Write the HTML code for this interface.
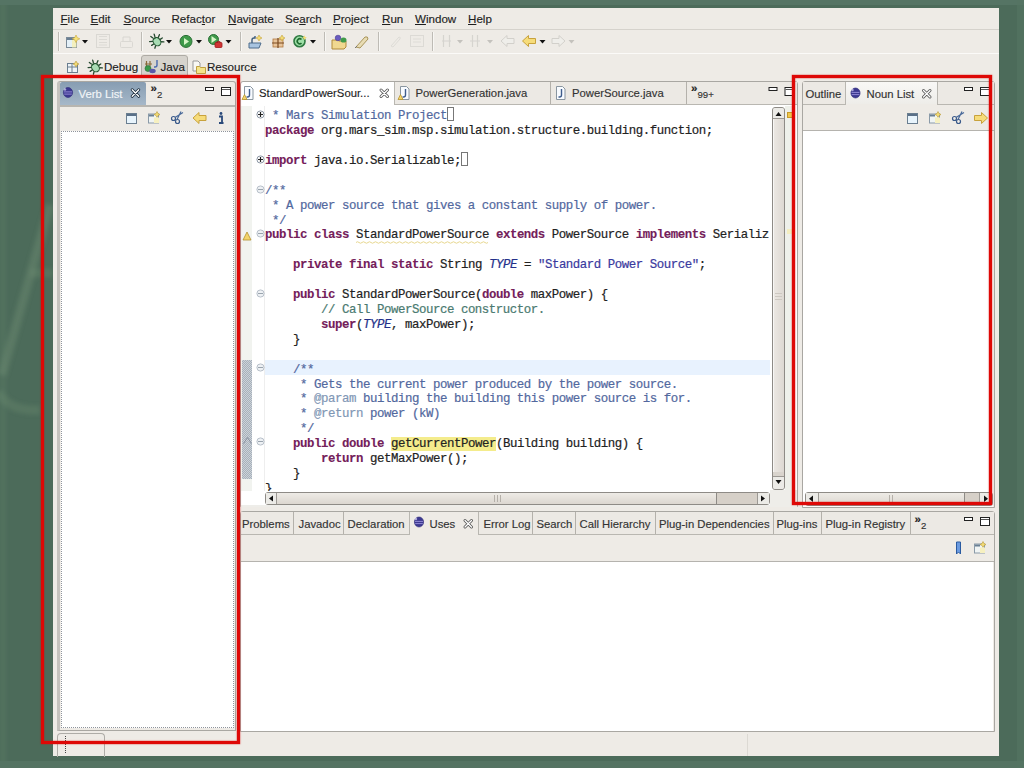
<!DOCTYPE html>
<html><head><meta charset="utf-8">
<style>
*{box-sizing:border-box;margin:0;padding:0}
html,body{width:1024px;height:768px;overflow:hidden;background:#4c6b5a;font-family:"Liberation Sans",sans-serif;font-size:11.3px;color:#1e1e1e}
.a{position:absolute}
.t{position:absolute;white-space:pre;line-height:1;-webkit-text-stroke:0.15px}
.m{position:absolute;white-space:pre;line-height:1;font-size:11.6px;top:13px;-webkit-text-stroke:0.15px}
.u{text-decoration:underline}
.code{font-family:"Liberation Mono",monospace;font-size:12.4px;letter-spacing:-0.44px;line-height:14.9px;white-space:pre;color:#222;-webkit-text-stroke:0.2px}
.xk{color:#74205a;font-weight:bold;-webkit-text-stroke:0.1px}
.xc{color:#52689e}
.xg{color:#4a7a70}
.xs{color:#3a3a9e}
.xi{font-style:italic;color:#23308a}
.xt{color:#7f97b5}
.xhl{background:#f4ec8c}
.red{position:absolute;border:3px solid #de0806;box-shadow:0 0 1px 0.3px rgba(215,12,8,.7),inset 0 0 1px 0.3px rgba(215,12,8,.7)}
.sep{position:absolute;width:2px;border-left:1px solid #bebbb5;border-right:1px solid #f8f7f4}
.vsep{position:absolute;width:1px;background:#b4b1ab}
svg{position:absolute;overflow:visible}
</style></head><body>
<svg style="left:0;top:0" width="53" height="768"><defs><filter id="bl" x="-50%" y="-50%" width="200%" height="200%"><feGaussianBlur stdDeviation="2"/></filter></defs><g filter="url(#bl)" fill="none" stroke="#86a482"><path d="M2 375 L50 205" stroke-width="9" opacity="0.25"/><path d="M30 273 L53 273" stroke-width="9" opacity="0.18"/><path d="M-2 392 Q10 412 40 410" stroke-width="9" opacity="0.2"/><path d="M3 0 V768" stroke-width="6" opacity="0.12"/></g></svg>
<div class="a" style="left:0;top:0;width:1024px;height:5px;background:#557464"></div>
<div class="a" style="left:0;top:761px;width:1024px;height:7px;background:#547362"></div>
<div class="a" style="left:53px;top:8px;width:946px;height:748px;background:#eeebe6"></div>

<!-- menu -->
<div class="a" style="left:53px;top:29px;width:946px;height:1px;background:#d5d2cc"></div>
<div class="m" style="left:60.5px"><span class="u">F</span>ile</div>
<div class="m" style="left:90.5px"><span class="u">E</span>dit</div>
<div class="m" style="left:123.5px"><span class="u">S</span>ource</div>
<div class="m" style="left:171.5px">Refac<span class="u">t</span>or</div>
<div class="m" style="left:228px"><span class="u">N</span>avigate</div>
<div class="m" style="left:285px">Se<span class="u">a</span>rch</div>
<div class="m" style="left:333px"><span class="u">P</span>roject</div>
<div class="m" style="left:382px"><span class="u">R</span>un</div>
<div class="m" style="left:415px"><span class="u">W</span>indow</div>
<div class="m" style="left:468px"><span class="u">H</span>elp</div>

<!-- toolbar -->
<div class="a" style="left:53px;top:53px;width:946px;height:1px;background:#fbfaf8"></div>
<div class="sep" style="left:58px;top:32px;height:19px"></div>
<div class="sep" style="left:141px;top:32px;height:19px"></div>
<div class="sep" style="left:240px;top:32px;height:19px"></div>
<div class="sep" style="left:324px;top:32px;height:19px"></div>
<div class="sep" style="left:378px;top:32px;height:19px"></div>
<div class="sep" style="left:432px;top:32px;height:19px"></div>
<!-- TOOLBAR_ICONS -->

<!-- perspective bar -->
<!-- PERSP_ICONS -->
<div class="t" style="left:104px;top:60.8px;font-size:11.6px">Debug</div>
<div class="a" style="left:141px;top:55px;width:47px;height:23px;background:#d6d3cd;border:1px solid #aeaba5;border-radius:3px"></div>
<div class="t" style="left:160.5px;top:60.8px;font-size:11.6px">Java</div>
<div class="t" style="left:207px;top:60.8px;font-size:11.6px">Resource</div>

<!-- left view -->
<div class="a" style="left:57px;top:81px;width:179px;height:650px;background:#eeebe6;border:1px solid #a9a7a2;border-left:3px solid #c4c2bd;border-radius:3px 3px 0 0"></div>
<div class="a" style="left:60px;top:82px;width:86px;height:24px;background:linear-gradient(#879db2,#a7b9ca);border-radius:2px 2px 0 0"></div>
<div class="t" style="left:78.5px;top:89.1px;color:#f2f5f8">Verb List</div>
<div class="a" style="left:60px;top:105px;width:175px;height:2px;background:#b7b5b0"></div>
<div class="t" style="left:150.5px;top:82.5px;font-size:11.5px;font-weight:bold;color:#222">&#187;</div>
<div class="t" style="left:157px;top:90px;font-size:9.6px;color:#333">2</div>
<div class="a" style="left:61px;top:131px;width:173px;height:597px;background:#fff;border:1px dotted #8f949c"></div>

<!-- editor -->
<div class="a" style="left:240px;top:81px;width:558px;height:426px;background:#fff;border:1px solid #a9a7a2;border-radius:3px 3px 0 0"></div>
<div class="a" style="left:394px;top:82px;width:403px;height:23px;background:#ece9e4;border-bottom:1px solid #b9b7b1;border-left:1px solid #b9b7b1"></div>
<div class="vsep" style="left:550px;top:82px;height:22px"></div>
<div class="vsep" style="left:686px;top:82px;height:22px"></div>
<div class="t" style="left:259px;top:88.2px">StandardPowerSour...</div>
<div class="t" style="left:415.5px;top:88.2px;color:#333">PowerGeneration.java</div>
<div class="t" style="left:572px;top:88.2px;color:#333">PowerSource.java</div>
<div class="t" style="left:691px;top:82.5px;font-size:11.5px;font-weight:bold;color:#222">&#187;</div>
<div class="t" style="left:697.5px;top:90px;font-size:9.6px;color:#333">99+</div>

<div class="a" style="left:241px;top:106px;width:11px;height:385px;background:#f1f3ef"></div>
<div class="a" style="left:242px;top:360px;width:10px;height:119px;background:repeating-conic-gradient(#a7b1bb 0 25%,#cdd2d8 0 50%) 0 0/2px 2px"></div>
<div class="a" style="left:264px;top:106px;width:1px;height:385px;background:#eeeeee"></div>
<div class="a" style="left:265px;top:360px;width:505px;height:15px;background:#e8f2fe"></div>
<div class="a" style="left:265px;top:105px;width:505px;height:386px;overflow:hidden">
<pre class="code" style="position:absolute;left:0;top:4.2px"> <span class="xc">* Mars Simulation Project</span>
<span class="xk">package</span> org.mars_sim.msp.simulation.structure.building.function;

<span class="xk">import</span> java.io.Serializable;

<span class="xc">/**</span>
<span class="xc"> * A power source that gives a constant supply of power.</span>
<span class="xc"> */</span>
<span class="xk">public</span> <span class="xk">class</span> StandardPowerSource <span class="xk">extends</span> PowerSource <span class="xk">implements</span> Serializ

    <span class="xk">private</span> <span class="xk">final</span> <span class="xk">static</span> String <span class="xi">TYPE</span> = <span class="xs">"Standard Power Source"</span>;

    <span class="xk">public</span> StandardPowerSource(<span class="xk">double</span> maxPower) {
        <span class="xg">// Call PowerSource constructor.</span>
        <span class="xk">super</span>(<span class="xi">TYPE</span>, maxPower);
    }

    <span class="xc">/**</span>
<span class="xc">     * Gets the current power produced by the power source.</span>
<span class="xc">     * <span class="xt">@param</span> building the building this power source is for.</span>
<span class="xc">     * <span class="xt">@return</span> power (kW)</span>
<span class="xc">     */</span>
    <span class="xk">public</span> <span class="xk">double</span> <span class="xhl">getCurrentPower</span>(Building building) {
        <span class="xk">return</span> getMaxPower();
    }
}</pre>
</div>

<!-- fold markers -->
<svg style="left:0;top:0" width="1" height="1">
<g fill="#fff" stroke="#8c97a4" stroke-width="1">
<circle cx="260.5" cy="114.5" r="3.6"/><circle cx="260.5" cy="159.5" r="3.6"/>
</g>
<g stroke="#222" stroke-width="1.2"><path d="M258 114.5h5M260.5 112v5M258 159.5h5M260.5 157v5"/></g>
<g fill="#eef1f4" stroke="#b8c0ca" stroke-width="1">
<circle cx="260.5" cy="189.5" r="3.6"/><circle cx="260.5" cy="233.5" r="3.6"/><circle cx="260.5" cy="293.5" r="3.6"/><circle cx="260.5" cy="367.5" r="3.6"/><circle cx="260.5" cy="441.5" r="3.6"/>
</g>
<g stroke="#9aa4ae" stroke-width="1"><path d="M258 189.5h5M258 233.5h5M258 293.5h5M258 367.5h5M258 441.5h5"/></g>
<rect x="447.5" y="107.5" width="6" height="13" fill="none" stroke="#777" stroke-width="1"/>
<rect x="461.5" y="152.5" width="6" height="13" fill="none" stroke="#777" stroke-width="1"/>
<path d="M243 240 l4 -8 l4 8z" fill="#f3d46a" stroke="#b39030" stroke-width="0.8"/>
<path d="M243.5 443.5 l4 -6 l4 6" fill="none" stroke="#8890a0" stroke-width="1"/>
</svg>
<!-- vscroll -->
<div class="a" style="left:772px;top:107px;width:13px;height:383px;background:#d9d4cd;border:1px solid #8e8b86;border-radius:3px"></div>
<div class="a" style="left:773px;top:119px;width:11px;height:353px;background:linear-gradient(90deg,#ebe7e2,#ddd8d2);border-left:1px solid #f8f7f5"></div>
<div class="a" style="left:773px;top:108px;width:11px;height:11px;background:#ecebe7;border-bottom:1px solid #9c9994;border-radius:2px 2px 0 0"></div>
<div class="a" style="left:773px;top:476px;width:11px;height:13px;background:#ecebe7;border-top:1px solid #9c9994;border-radius:0 0 2px 2px"></div>
<svg style="left:0;top:0" width="1" height="1"><path d="M775.5 116 l3 -4 l3 4z M775.5 480 l3 4 l3 -4z" fill="#111"/>
<path d="M775 293.5h7M775 296.5h7M775 299.5h7" stroke="#cdc8c1" stroke-width="1"/></svg>
<div class="a" style="left:785px;top:106px;width:7px;height:384px;background:#eef0ea"></div>
<div class="a" style="left:787px;top:112px;width:6px;height:6px;background:#f1c84c;border:1px solid #c59a2a"></div>
<div class="a" style="left:770px;top:490px;width:27px;height:17px;background:#eeede9"></div>
<div class="a" style="left:241px;top:505px;width:556px;height:2px;background:#eeede9"></div>
<div class="a" style="left:787px;top:229px;width:5px;height:5px;background:#f4eec0"></div>
<svg style="left:0;top:0" width="1" height="1"><path d="M356 242.5 q1.5 -1.5 3 0 t3 0 t3 0 t3 0 t3 0 t3 0 t3 0 t3 0 t3 0 t3 0 t3 0 t3 0 t3 0 t3 0 t3 0 t3 0 t3 0 t3 0 t3 0 t3 0 t3 0 t3 0 t3 0 t3 0 t3 0 t3 0 t3 0 t3 0 t3 0 t3 0 t3 0 t3 0 t3 0 t3 0 t3 0 t3 0 t3 0 t3 0 t3 0 t3 0 t3 0 t3 0 t3 0 t3 0" fill="none" stroke="#e8d890" stroke-width="1"/></svg>
<!-- hscroll -->
<div class="a" style="left:265px;top:492px;width:505px;height:13px;background:#d6d0c8;border:1px solid #8e8b86;border-radius:3px"></div>
<div class="a" style="left:277px;top:493px;width:440px;height:11px;background:linear-gradient(#eeebe6,#dcd7d0);border-right:1px solid #8e8b86"></div>
<div class="a" style="left:266px;top:493px;width:11px;height:11px;background:#ecebe7;border-right:1px solid #9c9994"></div>
<div class="a" style="left:757px;top:493px;width:12px;height:11px;background:#ecebe7;border-left:1px solid #9c9994"></div>
<svg style="left:0;top:0" width="1" height="1"><path d="M273 495.5 l-4 3 l4 3z M761 495.5 l4 3 l-4 3z" fill="#111"/>
<path d="M494.5 495v7M497.5 495v7M500.5 495v7" stroke="#b5b0a9" stroke-width="1"/></svg>
<!-- EDITOR_ICONS -->

<!-- right view -->
<div class="a" style="left:802px;top:81px;width:193px;height:427px;background:#eeebe6;border:1px solid #a9a7a2;border-radius:3px 3px 0 0"></div>
<div class="a" style="left:803px;top:82px;width:43px;height:23px;background:#ece9e4;border-right:1px solid #b9b7b1;border-bottom:1px solid #b9b7b1"></div>
<div class="a" style="left:937px;top:82px;width:57px;height:23px;background:#ece9e4;border-left:1px solid #b9b7b1;border-bottom:1px solid #b9b7b1"></div>
<div class="t" style="left:805.5px;top:89.1px;color:#333">Outline</div>
<div class="a" style="left:846px;top:82px;width:91px;height:22px;background:linear-gradient(#f9f8f6,#eeede9)"></div>
<div class="t" style="left:866.5px;top:89.1px;color:#333">Noun List</div>
<div class="a" style="left:803px;top:130px;width:191px;height:1px;background:#b5b3ae"></div>
<div class="a" style="left:803px;top:131px;width:190px;height:376px;background:#fff"></div>

<!-- right hscroll -->
<div class="a" style="left:805px;top:492px;width:188px;height:14px;background:#d6d0c8;border:1px solid #8e8b86;border-radius:3px"></div>
<div class="a" style="left:818px;top:493px;width:147px;height:12px;background:linear-gradient(#eeebe6,#dcd7d0);border-right:1px solid #8e8b86;border-left:1px solid #9c9994"></div>
<div class="a" style="left:806px;top:493px;width:12px;height:12px;background:#ecebe7"></div>
<div class="a" style="left:979px;top:493px;width:13px;height:12px;background:#ecebe7;border-left:1px solid #9c9994"></div>
<svg style="left:0;top:0" width="1" height="1"><path d="M813 495.5 l-4 3.2 l4 3.2z M984 495.5 l4 3.2 l-4 3.2z" fill="#111"/>
<path d="M889.5 495v8M892.5 495v8" stroke="#b5b0a9" stroke-width="1"/></svg>
<!-- RIGHT_ICONS -->

<!-- bottom panel -->
<div class="a" style="left:240px;top:511px;width:755px;height:221px;background:#eeebe6;border:1px solid #a9a7a2;border-radius:3px 3px 0 0"></div>
<div class="a" style="left:241px;top:512px;width:169px;height:23px;background:#ece9e4;border-bottom:1px solid #b9b7b1;border-right:1px solid #b9b7b1"></div>
<div class="a" style="left:478px;top:512px;width:516px;height:23px;background:#ece9e4;border-bottom:1px solid #b9b7b1;border-left:1px solid #b9b7b1"></div>
<div class="vsep" style="left:293px;top:512px;height:22px"></div>
<div class="vsep" style="left:343px;top:512px;height:22px"></div>
<div class="vsep" style="left:532px;top:512px;height:22px"></div>
<div class="vsep" style="left:575px;top:512px;height:22px"></div>
<div class="vsep" style="left:655px;top:512px;height:22px"></div>
<div class="vsep" style="left:773px;top:512px;height:22px"></div>
<div class="vsep" style="left:821px;top:512px;height:22px"></div>
<div class="vsep" style="left:910px;top:512px;height:22px"></div>
<div class="t" style="left:242px;top:518.8px;color:#333">Problems</div>
<div class="t" style="left:298.5px;top:518.8px;color:#333">Javadoc</div>
<div class="t" style="left:347.5px;top:518.8px;color:#333">Declaration</div>
<div class="t" style="left:429.5px;top:518.8px;color:#333">Uses</div>
<div class="t" style="left:483.5px;top:518.8px;color:#333">Error Log</div>
<div class="t" style="left:536.5px;top:518.8px;color:#333">Search</div>
<div class="t" style="left:579.5px;top:518.8px;color:#333">Call Hierarchy</div>
<div class="t" style="left:659px;top:518.8px;color:#333">Plug-in Dependencies</div>
<div class="t" style="left:776.5px;top:518.8px;color:#333">Plug-ins</div>
<div class="t" style="left:825.5px;top:518.8px;color:#333">Plug-in Registry</div>
<div class="t" style="left:914.5px;top:513.5px;font-size:11.5px;font-weight:bold;color:#222">&#187;</div>
<div class="t" style="left:921px;top:521px;font-size:9.6px;color:#333">2</div>
<div class="a" style="left:241px;top:561px;width:753px;height:1px;background:#b5b3ae"></div>
<div class="a" style="left:241px;top:562px;width:752px;height:169px;background:#fff"></div>
<!-- BOTTOM_ICONS -->

<!-- status -->
<div class="a" style="left:747px;top:734px;width:1px;height:22px;background:#dcd9d3"></div>
<div class="a" style="left:1017px;top:0;width:7px;height:768px;background:#557563;opacity:.6"></div>
<div class="a" style="left:57px;top:733px;width:48px;height:24px;border:1px solid #aeaca7;border-bottom:none;border-radius:4px 4px 0 0"></div>
<div class="a" style="left:65px;top:736px;width:1px;height:17px;border-left:1px dotted #444"></div>

<!-- ICONS_START --><svg style="left:0;top:0" width="1024" height="768"><rect x="66.5" y="37.5" width="10" height="10" fill="#e4f0f8" stroke="#7a8a98"/><rect x="67" y="38" width="9" height="2" fill="#6a8094"/><rect x="72" y="40" width="4.5" height="7.5" fill="#f4f0b8" opacity="0.9"/><path d="M76 35l1.2 2.6 2.6 1.2-2.6 1.2-1.2 2.6-1.2-2.6-2.6-1.2 2.6-1.2z" fill="#f6e27a" stroke="#c9a83a" stroke-width="0.6"/><path d="M82 40h6l-3 3.6z" fill="#111"/><rect x="96.5" y="34.5" width="13" height="13" fill="none" stroke="#dad8d3"/><path d="M99 36.5h8M99 39.5h8M99 42.5h8M99 45h8" stroke="#dcdad5"/><rect x="120.5" y="41.5" width="12" height="6" rx="1" fill="none" stroke="#dad8d3"/><path d="M123 41v-4h7v4" fill="none" stroke="#d8d6d1"/><g transform="rotate(-35 156.5 41)"><g stroke="#24482e" stroke-width="1.3" fill="none" stroke-linecap="round"><path d="M150.5 37.5l2.8 1.8M150.0 41.8h3M151.0 46l2.5 -2M162.5 37.5l-2.8 1.8M163.0 41.8h-3M162.0 46l-2.5 -2M154.5 34l0.8 2.4M158.5 34l-0.8 2.4"/></g><ellipse cx="156.5" cy="41.8" rx="3.6" ry="4.4" fill="#a8dcb4" stroke="#2a5a36" stroke-width="1.1"/><path d="M154.5 37.8h4" stroke="#2a5a36" stroke-width="1"/></g><path d="M166 40h6l-3 3.6z" fill="#111"/><circle cx="186" cy="41.4" r="6" fill="#3f9a4a" stroke="#2b6e35" stroke-width="1"/><path d="M184 37.9l5 3.5-5 3.5z" fill="#d8f5c8"/><path d="M196 40h6l-3 3.6z" fill="#111"/><circle cx="213.5" cy="39.5" r="5" fill="#3f9a4a" stroke="#2b6e35" stroke-width="1"/><path d="M211.5 36.0l5 3.5-5 3.5z" fill="#d8f5c8"/><rect x="215" y="42.5" width="7" height="5" rx="1" fill="#d03434" stroke="#a01c1c" stroke-width="0.8"/><path d="M217 43v-1.5h3v1.5" fill="none" stroke="#a01c1c" stroke-width="0.8"/><path d="M225.5 40h6l-3 3.6z" fill="#111"/><path d="M249 43h12l-2 5h-10z" fill="#a8c4e0" stroke="#4e6c8c" stroke-width="1"/><path d="M252 43v-3q0-2 2-2h1v-2" fill="none" stroke="#3e5c7c" stroke-width="1.4"/><path d="M259 35l1 2 2 1-2 1-1 2-1-2-2-1 2-1z" fill="#f4dc72" stroke="#c5a23a" stroke-width="0.6"/><rect x="273" y="39" width="10" height="8" fill="#e8c49a" stroke="#b07840" stroke-width="0.8"/><path d="M278 38v10M272 43h12" stroke="#7a4a20" stroke-width="1.2"/><path d="M282 35l1 2 2 1-2 1-1 2-1-2-2-1 2-1z" fill="#f4dc72" stroke="#c5a23a" stroke-width="0.6"/><circle cx="299.5" cy="41.3" r="5.5" fill="#9fe0a8" stroke="#2f7a42" stroke-width="1.6"/><path d="M301.5 39.5a2.5 2.5 0 1 0 0 3.6" fill="none" stroke="#1f6a30" stroke-width="1.6"/><path d="M304.5 35.3l0.8 1.6 1.6 0.8-1.6 0.8-0.8 1.6-0.8-1.6-1.6-0.8 1.6-0.8z" fill="#f4dc72"/><path d="M310 40h6l-3 3.6z" fill="#111"/><path d="M332 40h6l1 1h7v6l-2 2h-12z" fill="#f0d890" stroke="#b08a3a" stroke-width="1"/><circle cx="338" cy="38" r="2.8" fill="#6a5cc0" stroke="#4a3c90" stroke-width="0.6"/><ellipse cx="343.5" cy="40" rx="3" ry="2.6" fill="#3f9a4a"/><path d="M356 47l9-10q3-1 3 2l-8 9z" fill="#e8dcb4" stroke="#a8945a" stroke-width="1"/><path d="M355 48l2-2" stroke="#777" stroke-width="1"/><path d="M391 46l8-9q2 0 1 2l-7 8z" fill="none" stroke="#dddbd6" stroke-width="1"/><rect x="410.5" y="35.5" width="13" height="11" fill="none" stroke="#dcdad5"/><path d="M413 39h8M413 42h8" stroke="#dedcd7"/><path d="M443.5 35v12M449.5 35v12M442 41h9" stroke="#d6d4cf" stroke-width="1.2"/><path d="M457 40h6l-3 3.6z" fill="#c4c2bd"/><path d="M472.5 35v12M477.5 35v12M470 41h10" stroke="#d6d4cf" stroke-width="1.2"/><path d="M487 40h6l-3 3.6z" fill="#c4c2bd"/><path d="M501 41l6-5.5v3h7v5h-7v3z" fill="#efeeea" stroke="#d2d0cb" stroke-width="1"/><path d="M522.5 41l6-5.5v3h7v5h-7v3z" fill="#f6dc7a" stroke="#c8a23c" stroke-width="1"/><path d="M539.5 40h6l-3 3.6z" fill="#111"/><path d="M565 41l-6-5.5v3h-7v5h7v3z" fill="#efeeea" stroke="#d2d0cb" stroke-width="1"/><path d="M568.5 40h6l-3 3.6z" fill="#c4c2bd"/><rect x="67.5" y="63.5" width="10" height="9" fill="#eef4f8" stroke="#6a7e90"/><path d="M68 67h9M72 64v8" stroke="#6a7e90" stroke-width="1"/><path d="M76 61l1 2 2 1-2 1-1 2-1-2-2-1 2-1z" fill="#f4dc72" stroke="#b89a3a" stroke-width="0.6"/><g transform="rotate(-35 95 67)"><g stroke="#24482e" stroke-width="1.3" fill="none" stroke-linecap="round"><path d="M89 63.5l2.8 1.8M88.5 67.8h3M89.5 72l2.5 -2M101 63.5l-2.8 1.8M101.5 67.8h-3M100.5 72l-2.5 -2M93 60l0.8 2.4M97 60l-0.8 2.4"/></g><ellipse cx="95" cy="67.8" rx="3.6" ry="4.4" fill="#a8dcb4" stroke="#2a5a36" stroke-width="1.1"/><path d="M93 63.8h4" stroke="#2a5a36" stroke-width="1"/></g><path d="M145 64h7M146.5 61v5M150 61v5" stroke="#8a6a3a" stroke-width="1.2"/><circle cx="148" cy="68.5" r="3" fill="#3a9a4a" stroke="#2a6a3a" stroke-width="0.6"/><ellipse cx="152.5" cy="71" rx="3.2" ry="2.2" fill="#5a58a8"/><path d="M157 60v5q0 2-2 2h-1" fill="none" stroke="#4a6ab0" stroke-width="1.4"/><path d="M193.0 61.0h5l2 2v8h-7z" fill="#f8f8f4" stroke="#999" stroke-width="1"/><path d="M196.5 66.5h3l1 1h5v6h-9z" fill="#f4e48a" stroke="#c0a040" stroke-width="1"/><ellipse cx="68" cy="92.5" rx="4.6" ry="5" fill="#3c3890" stroke="#2e2a78" stroke-width="0.6"/><path d="M64 91.9h8M64.2 94.1h7.6" stroke="#9a92dc" stroke-width="0.9"/><circle cx="65" cy="89.5" r="1.2" fill="#d8d4f8" opacity="0.7"/><path d="M132.2 89.8l6.5 6.5M138.7 89.8l-6.5 6.5" stroke="#1a2a3a" stroke-width="3" stroke-linecap="round"/><path d="M132.2 89.8l6.5 6.5M138.7 89.8l-6.5 6.5" stroke="#fff" stroke-width="1.3" stroke-linecap="round"/><rect x="205.5" y="87.5" width="8" height="3" fill="#fff" stroke="#222" stroke-width="1"/><rect x="221.5" y="87.5" width="9" height="8" fill="#fff" stroke="#222" stroke-width="1"/><path d="M222 89.5h8" stroke="#555" stroke-width="1"/><rect x="126.5" y="113.5" width="10" height="10" fill="#e8f4fc" stroke="#6a7e90"/><rect x="127" y="114" width="9" height="2" fill="#5a7088"/><rect x="148.5" y="114.0" width="10" height="9" fill="#f0f4f4" stroke="#8a9aa8"/><rect x="149" y="114.5" width="5" height="2" fill="#6a8094"/><path d="M157 111.5l1 2 2 1-2 1-1 2-1-2-2-1 2-1z" fill="#f4dc72" stroke="#b89a3a" stroke-width="0.6"/><rect x="154" y="117.5" width="5" height="5.5" fill="#f6f0c0"/><circle cx="173.5" cy="118.5" r="2" fill="none" stroke="#3a5a8a" stroke-width="1.2"/><circle cx="177.5" cy="121.5" r="2" fill="none" stroke="#3a5a8a" stroke-width="1.2"/><path d="M175 117.5l8-5M177 119.5l4-8" stroke="#4a6a9a" stroke-width="1.2"/><path d="M193 118l6-5.5v3h7v5h-7v3z" fill="#f6dc7a" stroke="#c8a23c" stroke-width="1"/><circle cx="221" cy="113.5" r="1.4" fill="#2a4a7a"/><path d="M219 116.5h3v6.5M219 123h4.5" fill="none" stroke="#2a4a7a" stroke-width="1.8"/><path d="M244.5 86.5h6l2.5 2.5v10.5h-8.5z" fill="#f8fbff" stroke="#8a96a0" stroke-width="1"/><path d="M249.5 89v6q0 2-2 2h-1" fill="none" stroke="#3e5c8c" stroke-width="1.4"/><path d="M242 99.5l2.5-5 2.5 5z" fill="#f3d46a" stroke="#b8942e" stroke-width="0.8"/><path d="M381 90l6.5 6.5M387.5 90l-6.5 6.5" stroke="#555" stroke-width="3" stroke-linecap="round"/><path d="M381 90l6.5 6.5M387.5 90l-6.5 6.5" stroke="#fff" stroke-width="1.3" stroke-linecap="round"/><path d="M400.5 86.5h6l2.5 2.5v10.5h-8.5z" fill="#f8fbff" stroke="#8a96a0" stroke-width="1"/><path d="M405.5 89v6q0 2-2 2h-1" fill="none" stroke="#3e5c8c" stroke-width="1.4"/><path d="M398 99.5l2.5-5 2.5 5z" fill="#f3d46a" stroke="#b8942e" stroke-width="0.8"/><path d="M556.5 86.5h6l2.5 2.5v10.5h-8.5z" fill="#f8fbff" stroke="#8a96a0" stroke-width="1"/><path d="M561.5 89v6q0 2-2 2h-1" fill="none" stroke="#3e5c8c" stroke-width="1.4"/><rect x="769.0" y="87.5" width="8" height="3" fill="#fff" stroke="#222" stroke-width="1"/><rect x="785.0" y="87.5" width="9" height="8" fill="#fff" stroke="#222" stroke-width="1"/><path d="M785.5 89.5h8" stroke="#555" stroke-width="1"/><ellipse cx="855.5" cy="93" rx="4.6" ry="5" fill="#3c3890" stroke="#2e2a78" stroke-width="0.6"/><path d="M851.5 92.4h8M851.7 94.6h7.6" stroke="#9a92dc" stroke-width="0.9"/><circle cx="852.5" cy="90" r="1.2" fill="#d8d4f8" opacity="0.7"/><path d="M923.5 90.5l6.5 6.5M930.0 90.5l-6.5 6.5" stroke="#555" stroke-width="3" stroke-linecap="round"/><path d="M923.5 90.5l6.5 6.5M930.0 90.5l-6.5 6.5" stroke="#fff" stroke-width="1.3" stroke-linecap="round"/><rect x="964.5" y="87.5" width="8" height="3" fill="#fff" stroke="#222" stroke-width="1"/><rect x="980.5" y="87.5" width="9" height="8" fill="#fff" stroke="#222" stroke-width="1"/><path d="M981 89.5h8" stroke="#555" stroke-width="1"/><rect x="907.5" y="113.5" width="10" height="10" fill="#e8f4fc" stroke="#6a7e90"/><rect x="908" y="114" width="9" height="2" fill="#5a7088"/><rect x="929.5" y="114.0" width="10" height="9" fill="#f0f4f4" stroke="#8a9aa8"/><rect x="930" y="114.5" width="5" height="2" fill="#6a8094"/><path d="M938 111.5l1 2 2 1-2 1-1 2-1-2-2-1 2-1z" fill="#f4dc72" stroke="#b89a3a" stroke-width="0.6"/><rect x="935" y="117.5" width="5" height="5.5" fill="#f6f0c0"/><circle cx="954.5" cy="118.5" r="2" fill="none" stroke="#3a5a8a" stroke-width="1.2"/><circle cx="958.5" cy="121.5" r="2" fill="none" stroke="#3a5a8a" stroke-width="1.2"/><path d="M956 117.5l8-5M958 119.5l4-8" stroke="#4a6a9a" stroke-width="1.2"/><path d="M987.5 118l-6-5.5v3h-7v5h7v3z" fill="#f6dc7a" stroke="#c8a23c" stroke-width="1"/><ellipse cx="419" cy="522" rx="4.6" ry="5" fill="#3c3890" stroke="#2e2a78" stroke-width="0.6"/><path d="M415 521.4h8M415.2 523.6h7.6" stroke="#9a92dc" stroke-width="0.9"/><circle cx="416" cy="519" r="1.2" fill="#d8d4f8" opacity="0.7"/><path d="M465 520.5l6.5 6.5M471.5 520.5l-6.5 6.5" stroke="#555" stroke-width="3" stroke-linecap="round"/><path d="M465 520.5l6.5 6.5M471.5 520.5l-6.5 6.5" stroke="#fff" stroke-width="1.3" stroke-linecap="round"/><rect x="964.5" y="517.5" width="8" height="3" fill="#fff" stroke="#222" stroke-width="1"/><rect x="980.5" y="517.5" width="9" height="8" fill="#fff" stroke="#222" stroke-width="1"/><path d="M981 519.5h8" stroke="#555" stroke-width="1"/><path d="M956.5 542.0h4v12l-2-2-2 2z" fill="#6a9ae0" stroke="#2a5aa0" stroke-width="1"/><rect x="974.5" y="544.0" width="10" height="9" fill="#f0f4f4" stroke="#8a9aa8"/><rect x="975" y="544.5" width="5" height="2" fill="#6a8094"/><path d="M983 541.5l1 2 2 1-2 1-1 2-1-2-2-1 2-1z" fill="#f4dc72" stroke="#b89a3a" stroke-width="0.6"/><rect x="980" y="547.5" width="5" height="5.5" fill="#f6f0c0"/></svg><!-- ICONS_END -->
<!-- red boxes -->
<div class="red" style="left:41px;top:75px;width:199px;height:669px"></div>
<div class="red" style="left:792px;top:75px;width:200px;height:430px"></div>
</body></html>
